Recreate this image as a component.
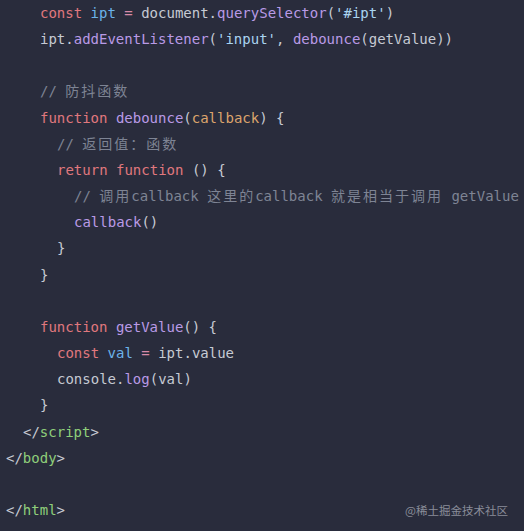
import React from 'react'

const K = 'text-[#e0787e]'
const V = 'text-[#6cb3ea]'
const F = 'text-[#b99ae6]'
const P = 'text-[#dca46c]'
const S = 'text-[#a9d4f0]'
const C = 'text-[#7e8494]'
const T = 'text-[#8fcf7a]'
const O = 'text-[#d88aa8]'

function Cjk({ children }) {
  return <span className="tracking-[2px]">{children}</span>
}

function Line({ indent = 0, children }) {
  const pad = ['pl-0', 'pl-[17px]', 'pl-[34px]', 'pl-[51px]', 'pl-[68px]'][indent]
  return <div className={`h-[26.16px] whitespace-pre ${pad}`}>{children || ' '}</div>
}

export default function App() {
  return (
    <div className="relative w-[524px] h-[531px] overflow-hidden bg-[#292c3c] text-[#c6cad3] text-[14px] leading-[26.16px] pl-[6px]" style={{ fontFamily: '"DejaVu Sans Mono", "Noto Sans CJK SC", monospace' }}>
      <Line indent={2}><span className={K}>const</span> <span className={V}>ipt</span> <span className={O}>=</span> document.<span className={F}>querySelector</span>(<span className={S}>'#ipt'</span>)</Line>
      <Line indent={2}>ipt.<span className={F}>addEventListener</span>(<span className={S}>'input'</span>, <span className={F}>debounce</span>(getValue))</Line>
      <Line />
      <Line indent={2}><span className={C}>// <Cjk>防抖函数</Cjk></span></Line>
      <Line indent={2}><span className={K}>function</span> <span className={F}>debounce</span>(<span className={P}>callback</span>) {'{'}</Line>
      <Line indent={3}><span className={C}>// <Cjk>返回值：函数</Cjk></span></Line>
      <Line indent={3}><span className={K}>return</span> <span className={K}>function</span> () {'{'}</Line>
      <Line indent={4}><span className={C}>// <Cjk>调用</Cjk>callback <Cjk>这里的</Cjk>callback <Cjk>就是相当于调用</Cjk> getValue</span></Line>
      <Line indent={4}><span className={F}>callback</span>()</Line>
      <Line indent={3}>{'}'}</Line>
      <Line indent={2}>{'}'}</Line>
      <Line />
      <Line indent={2}><span className={K}>function</span> <span className={F}>getValue</span>() {'{'}</Line>
      <Line indent={3}><span className={K}>const</span> <span className={V}>val</span> <span className={O}>=</span> ipt.value</Line>
      <Line indent={3}>console.<span className={F}>log</span>(val)</Line>
      <Line indent={2}>{'}'}</Line>
      <Line indent={1}>&lt;/<span className={T}>script</span>&gt;</Line>
      <Line>&lt;/<span className={T}>body</span>&gt;</Line>
      <Line />
      <Line>&lt;/<span className={T}>html</span>&gt;</Line>
      <div className="absolute right-[16px] bottom-[15px] text-[11.5px] leading-none text-[#8a8d99]" style={{ fontFamily: '"Noto Sans CJK SC", "Noto Sans", sans-serif' }}>@稀土掘金技术社区</div>
    </div>
  )
}
